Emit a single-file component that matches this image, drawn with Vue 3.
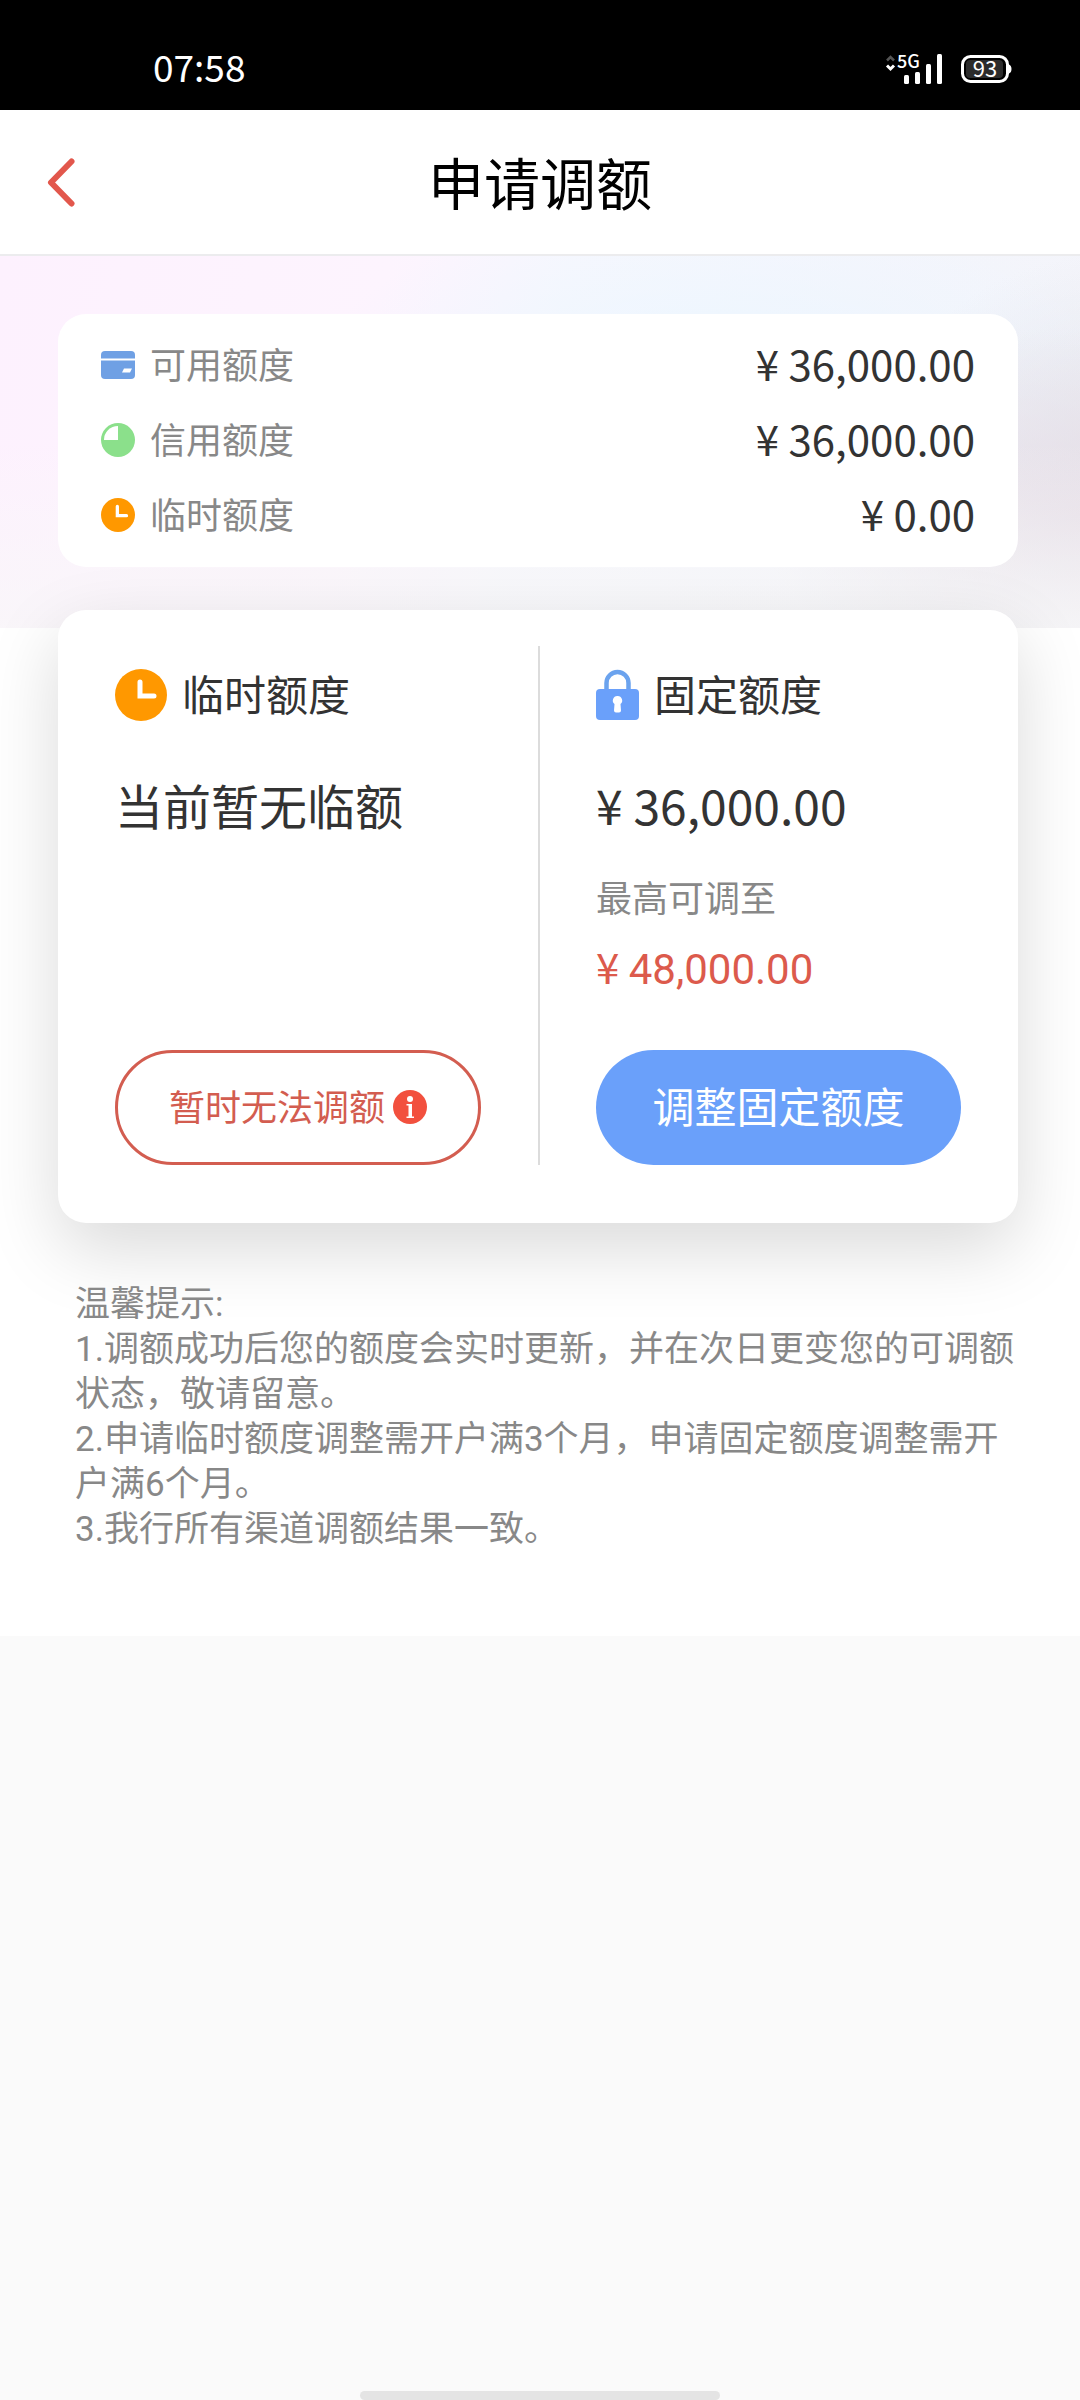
<script setup>
const limits = [
  { id: 'available', label: '可用额度', amount: '36,000.00' },
  { id: 'credit', label: '信用额度', amount: '36,000.00' },
  { id: 'temporary', label: '临时额度', amount: '0.00' },
]

const tips = [
  '1.调额成功后您的额度会实时更新，并在次日更变您的可调额状态，敬请留意。',
  '2.申请临时额度调整需开户满3个月，申请固定额度调整需开户满6个月。',
  '3.我行所有渠道调额结果一致。',
]
</script>

<template>
  <div class="screen">
    <div class="status">
      <span class="time">07:58</span>
      <svg class="status-icons" width="130" height="42" viewBox="0 -10 130 42" aria-hidden="true">
        <path d="M2 7.500l3.500-3.500l3.500 3.500" fill="none" stroke="#555" stroke-width="2.500" />
        <path d="M2 12.500l3.500 3.500l3.500-3.500" fill="none" stroke="#fff" stroke-width="3" />
        <text x="12" y="15" class="net">5G</text>
        <rect x="19" y="22" width="5" height="9" rx="1.500" fill="#fff" />
        <rect x="30" y="19" width="5" height="12" rx="1.500" fill="#fff" />
        <rect x="41" y="11" width="5" height="20" rx="1.500" fill="#fff" />
        <rect x="52" y="1" width="5" height="30" rx="1.500" fill="#fff" />
        <rect x="77.500" y="3.500" width="45" height="25" rx="8" fill="none" stroke="#fff" stroke-width="3" />
        <rect x="81" y="7" width="37" height="18" rx="4" fill="#2b2b2b" />
        <path d="M124 11.500q2.500 1 2.500 4.500t-2.500 4.500z" fill="#fff" />
        <text x="100" y="24" text-anchor="middle" class="charge">93</text>
      </svg>
    </div>

    <header class="header">
      <button class="back" type="button" aria-label="返回">
        <svg width="30" height="50" viewBox="0 0 30 50">
          <path d="M25.500 4.500L5 25.500L25.500 46.500" fill="none" stroke="#e2574c" stroke-width="6" stroke-linecap="round" stroke-linejoin="round" />
        </svg>
      </button>
      <h1 class="title">申请调额</h1>
    </header>

    <main class="content">
      <div class="banner">
        <dl class="card summary">
          <div v-for="item in limits" :key="item.id" class="row">
            <dt class="label">
              <svg v-if="item.id === 'available'" width="34" height="34" viewBox="0 0 34 34">
                <rect y="3" width="34" height="28" rx="4" fill="#6fa0e4" />
                <path d="M0 11.500h34" stroke="#fff" stroke-width="2" />
                <path d="M23 20.500h8l-2 4h-8z" fill="#fff" />
              </svg>
              <svg v-else-if="item.id === 'credit'" width="34" height="34" viewBox="0 0 34 34">
                <circle cx="17" cy="17" r="17" fill="#8be08b" />
                <path d="M17 17V3A14 14 0 0 0 3 17z" fill="#fff" />
              </svg>
              <svg v-else width="34" height="34" viewBox="0 0 52 52">
                <circle cx="26" cy="26" r="26" fill="#ff9800" />
                <path d="M25 13v14h14" fill="none" stroke="#fff" stroke-width="5" stroke-linecap="round" />
              </svg>
              {{ item.label }}
            </dt>
            <dd class="amount">¥ {{ item.amount }}</dd>
          </div>
        </dl>
      </div>

      <div class="card options">
        <section class="option">
          <h2 class="heading">
            <svg width="52" height="52" viewBox="0 0 52 52">
              <circle cx="26" cy="26" r="26" fill="#ff9800" />
              <path d="M25 13v14h14" fill="none" stroke="#fff" stroke-width="5" stroke-linecap="round" />
            </svg>
            临时额度
          </h2>
          <p class="value">当前暂无临额</p>
          <button class="pill outline" type="button">
            暂时无法调额
            <svg width="34" height="34" viewBox="0 0 34 34">
              <circle cx="17" cy="17" r="17" fill="#f2503e" />
              <circle cx="17" cy="9" r="3" fill="#fff" />
              <path d="M13.500 14h5.500v12.500h2v1.500h-7.500v-1.500h2v-11h-2z" fill="#fff" />
            </svg>
          </button>
        </section>

        <section class="option fixed">
          <h2 class="heading">
            <svg width="43" height="52" viewBox="0 0 43 52">
              <path d="M10.500 22V14a11 11 0 0 1 22 0v8" fill="none" stroke="#6ba3ee" stroke-width="4.500" />
              <rect y="20" width="43" height="31" rx="4" fill="#6aa0fa" />
              <path d="M21.500 27a4.500 4.500 0 0 1 3 8l.5 6.500a2 2 0 0 1-2 2h-3a2 2 0 0 1-2-2l.5-6.500a4.500 4.500 0 0 1 3-8z" fill="#fff" />
            </svg>
            固定额度
          </h2>
          <p class="value">¥ 36,000.00</p>
          <p class="note">最高可调至</p>
          <p class="max">¥ <span class="figure">48,000.00</span></p>
          <button class="pill solid" type="button">调整固定额度</button>
        </section>
      </div>

      <section class="tips">
        <p>温馨提示:</p>
        <p v-for="tip in tips" :key="tip">{{ tip }}</p>
      </section>
    </main>

    <div class="home-bar"></div>
  </div>
</template>

<style>
body {
  margin: 0;
  background: #fafafa;
}
</style>

<style scoped>
.screen {
  display: flex;
  flex-direction: column;
  min-height: 100vh;
  background: #fafafa;
  color: #333;
  font-family: "Noto Sans CJK SC", sans-serif;
}

h1, h2, p, dl, dd {
  margin: 0;
  font-weight: 400;
}

button {
  padding: 0;
  border: 0;
  background: none;
  font-family: inherit;
}

svg {
  flex: none;
  display: block;
}

.status {
  display: flex;
  align-items: flex-end;
  justify-content: space-between;
  box-sizing: border-box;
  height: 110px;
  padding: 0 65px 25px 153px;
  background: #000;
  color: #fff;
}

.time {
  font-size: 37px;
  line-height: 37px;
}

.net {
  fill: #fff;
  font-size: 18px;
  font-weight: 500;
}

.charge {
  fill: #fff;
  font-size: 22px;
}

.header {
  display: grid;
  grid-template-columns: 120px 1fr 120px;
  align-items: center;
  height: 144px;
  border-bottom: 2px solid #ececee;
  background: #fff;
}

.back {
  display: flex;
  align-items: center;
  height: 100%;
  padding-left: 46px;
}

.title {
  padding-bottom: 2px;
  color: #000;
  font-size: 56px;
  line-height: 80px;
  text-align: center;
}

.content {
  background: #fff;
}

.banner {
  height: 314px;
  padding: 58px 62px 0 58px;
  background:
    linear-gradient(to bottom, rgba(248, 248, 248, 0) 50%, rgba(248, 248, 248, 0.7) 100%),
    radial-gradient(ellipse 320px 190px at 100% 70%, #e6dee7, rgba(230, 222, 231, 0)),
    radial-gradient(ellipse 240px 190px at 104% 50%, #e6e7ed, rgba(230, 231, 237, 0)),
    radial-gradient(ellipse 420px 170px at 68% 32%, #ebf6ff, rgba(235, 246, 255, 0)),
    linear-gradient(100deg, #fdf1fe 0%, #fdf4fe 34%, #f7f7fe 50%, #f3f4fa 100%);
}

.card {
  border-radius: 28px;
  background: #fff;
}

.summary {
  padding: 11px 43px 17px;
}

.row {
  display: flex;
  align-items: center;
  justify-content: space-between;
  height: 75px;
}

.label {
  display: flex;
  align-items: center;
  gap: 15px;
  color: #888;
  font-size: 36px;
  line-height: 48px;
}

.label svg,
.heading svg,
.outline svg {
  margin-top: 4px;
}

.amount {
  font-size: 42px;
  line-height: 48px;
}

.options {
  display: grid;
  grid-template-columns: 1fr 1fr;
  margin: -18px 62px 0 58px;
  padding: 36px 0 58px;
  box-shadow: 0 26px 72px rgba(0, 0, 0, 0.15);
}

.option {
  display: flex;
  flex-direction: column;
  padding: 19px 57px 0;
}

.fixed {
  padding-left: 56px;
  border-left: 2px solid #dcdcdc;
}

.heading {
  display: flex;
  align-items: center;
  gap: 15px;
  font-size: 42px;
  line-height: 56px;
}

.value {
  margin-top: 53px;
  font-size: 48px;
  line-height: 60px;
}

.note {
  margin-top: 38px;
  color: #888;
  font-size: 36px;
  line-height: 48px;
}

.max {
  margin-top: 22px;
  color: #dc5a4c;
  font-size: 42px;
  line-height: 48px;
}

.figure {
  font-family: Roboto, sans-serif;
}

.pill {
  display: flex;
  align-items: center;
  justify-content: center;
  box-sizing: border-box;
  height: 115px;
  padding-bottom: 6px;
  border-radius: 58px;
}

.outline {
  gap: 8px;
  margin-top: auto;
  border: 3px solid #d35d50;
  color: #d35d50;
  font-size: 36px;
}

.solid {
  margin-top: 56px;
  background: #6aa0fa;
  color: #fff;
  font-size: 42px;
}

.tips {
  padding: 59px 60px 84px 75px;
  color: #888;
  font-family: Roboto, "Noto Sans CJK SC", sans-serif;
  font-size: 35px;
  line-height: 45px;
}

.home-bar {
  width: 360px;
  height: 9px;
  margin: auto auto 0;
  border-radius: 5px;
  background: #e4e4e4;
}
</style>
